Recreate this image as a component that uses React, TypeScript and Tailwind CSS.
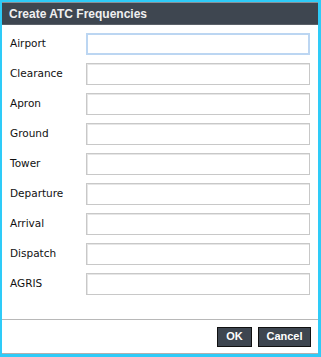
import React from 'react';

const FIELDS = ['Airport', 'Clearance', 'Apron', 'Ground', 'Tower', 'Departure', 'Arrival', 'Dispatch', 'AGRIS'];

const App: React.FC = () => {
    return (
        <div className="w-[321px] h-[357px] bg-[#2ecbf8] pl-[2px] pt-[2px] pr-[3px] pb-[3px]" style={{ fontFamily: '"DejaVu Sans", "Liberation Sans", sans-serif' }}>
            <div className="h-full flex flex-col bg-white border-b border-[#b0b0b0]">
                <div className="h-[23px] bg-[#3e4650] border-t border-[#8a8f95] border-b border-b-[#5a6068] flex items-center pl-[7px]">
                    <span className="text-[12px] font-bold text-[#f0f0f0] font-['Liberation_Sans',sans-serif]">Create ATC Frequencies</span>
                </div>
                <div className="flex-1 flex flex-col gap-[8px] pt-[8px] pl-[8px] pr-[8px]">
                    {FIELDS.map((name, i) => (
                        <div key={name} className="flex items-center h-[22px]">
                            <label className="w-[76px] text-[10.5px] text-[#111]">{name}</label>
                            <input
                                type="text"
                                className={`flex-1 h-[22px] bg-white outline-none ${i === 0 ? 'border-2 border-[#bcd6f2]' : 'border border-[#c8c8c8] shadow-[inset_1px_1px_0_#e6e6e6]'}`}
                            />
                        </div>
                    ))}
                </div>
                <div className="h-[34px] border-t border-[#b8b8b8] flex items-center justify-end gap-[6px] pr-[7px]">
                    <button className="w-[35px] h-[20px] bg-[#3e4650] border border-[#111] text-white text-[11px] font-bold font-['Liberation_Sans',sans-serif]">OK</button>
                    <button className="w-[53px] h-[20px] bg-[#3e4650] border border-[#111] text-white text-[11px] font-bold font-['Liberation_Sans',sans-serif]">Cancel</button>
                </div>
            </div>
        </div>
    );
};

export default App;
